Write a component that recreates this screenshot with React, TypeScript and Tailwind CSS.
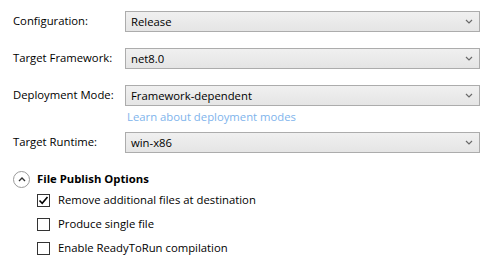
import React from "react"

const font = { fontFamily: '"Segoe UI", "Open Sans", "Noto Sans", sans-serif' }

function Chevron() {
  return (
    <svg width="8" height="5" viewBox="0 0 8 5" className="shrink-0">
      <path d="M1 1 L4 4 L7 1" fill="none" stroke="#6a6a6a" strokeWidth="1.2" />
    </svg>
  )
}

function Select({ value }: { value: string }) {
  return (
    <div className="flex-1 h-[21px] flex items-center justify-between border border-[#acacac] bg-gradient-to-b from-[#f0f0f0] to-[#e5e5e5] pl-[5px] pr-[6px]">
      <span className="text-[11.3px] text-black leading-none">{value}</span>
      <Chevron />
    </div>
  )
}

function Row({ label, value }: { label: string; value: string }) {
  return (
    <div className="flex items-center">
      <div className="w-[112px] text-[11.3px] text-black">{label}</div>
      <Select value={value} />
    </div>
  )
}

function Check({ label, checked }: { label: string; checked?: boolean }) {
  return (
    <div className="h-[24px] flex items-center pl-[37px]">
      <div className="w-[13px] h-[13px] border border-[#333333] bg-white flex items-center justify-center">
        {checked && (
          <svg width="11" height="11" viewBox="0 0 11 11">
            <path d="M1.5 5.5 L4.2 8.3 L9.5 2" fill="none" stroke="#000" strokeWidth="1.6" />
          </svg>
        )}
      </div>
      <span className="ml-[8px] text-[11.3px] text-black">{label}</span>
    </div>
  )
}

export default function App() {
  return (
    <div className="w-[498px] h-[261px] bg-white pt-[11px] pl-[13px] pr-[18px]" style={font}>
      <Row label="Configuration:" value="Release" />
      <div className="mt-[16px]">
        <Row label="Target Framework:" value="net8.0" />
      </div>
      <div className="mt-[16px]">
        <Row label="Deployment Mode:" value="Framework-dependent" />
      </div>
      <div className="ml-[114px] mt-[1px] h-[20px] flex items-center text-[11.3px] text-[#80b4ec]">
        Learn about deployment modes
      </div>
      <div className="mt-[5px]">
        <Row label="Target Runtime:" value="win-x86" />
      </div>
      <div className="-ml-[13px] mt-[17px]">
        <div className="h-[18px] flex items-center pl-[13px]">
          <div className="w-[17px] h-[17px] rounded-full border border-[#9a9a9a] flex items-center justify-center">
            <svg width="8" height="5" viewBox="0 0 8 5">
              <path d="M1 4 L4 1 L7 4" fill="none" stroke="#333" strokeWidth="1.4" />
            </svg>
          </div>
          <span className="ml-[7px] text-[11.3px] font-bold text-black">File Publish Options</span>
        </div>
        <Check label="Remove additional files at destination" checked />
        <Check label="Produce single file" />
        <Check label="Enable ReadyToRun compilation" />
      </div>
    </div>
  )
}
